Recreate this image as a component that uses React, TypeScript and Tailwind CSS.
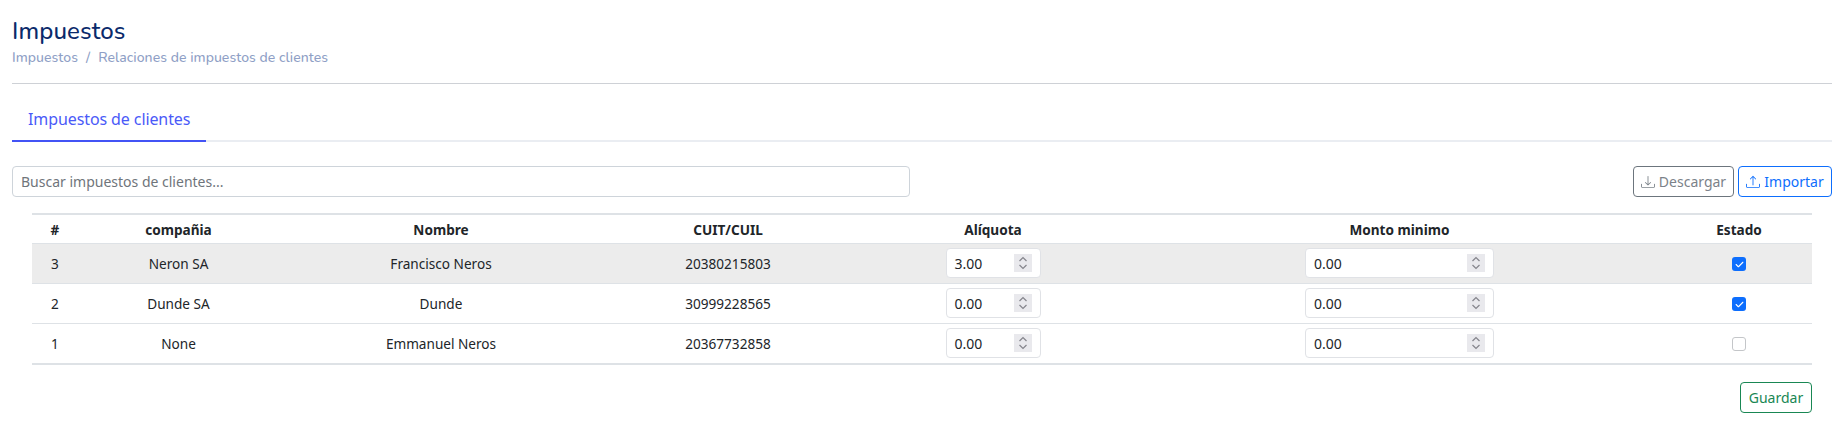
import { BsDownload, BsUpload } from "react-icons/bs";
import { FaCheck } from "react-icons/fa6";

type Row = {
  id: number;
  company: string;
  name: string;
  cuit: string;
  rate: string;
  min: string;
  active: boolean;
};

const rows: Row[] = [
  { id: 3, company: "Neron SA", name: "Francisco Neros", cuit: "20380215803", rate: "3.00", min: "0.00", active: true },
  { id: 2, company: "Dunde SA", name: "Dunde", cuit: "30999228565", rate: "0.00", min: "0.00", active: true },
  { id: 1, company: "None", name: "Emmanuel Neros", cuit: "20367732858", rate: "0.00", min: "0.00", active: false },
];

function NumberField({ value, width }: { value: string; width: string }) {
  return (
    <div className={`mx-auto flex h-[30px] items-center justify-between rounded-[4px] border border-[#e0e2e6] bg-white pl-[8px] pr-[8px] text-[14px] text-[#212529] ${width}`}>
      <span>{value}</span>
      <span className="flex h-[18px] w-[18px] items-center justify-center bg-[#e9e9ed]">
        <svg width="10" height="14" viewBox="0 0 10 14" fill="none" stroke="#85858c" strokeWidth="1.2">
          <path d="M1.5 5 5 1.5 8.500 5" />
          <path d="M1.5 9 5 12.500 8.500 9" />
        </svg>
      </span>
    </div>
  );
}

function Check({ on }: { on: boolean }) {
  if (!on) {
    return <span className="mx-auto block h-[14px] w-[14px] rounded-[3px] border border-[#c4c6c9] bg-white" />;
  }
  return (
    <span className="mx-auto flex h-[14px] w-[14px] items-center justify-center rounded-[3px] bg-[#0d6efd] text-white">
      <FaCheck className="h-[9px] w-[9px]" />
    </span>
  );
}

export default function App() {
  return (
    <div className="h-[427px] w-[1844px] overflow-hidden bg-white px-3 font-['Noto_Sans',sans-serif] text-[14px] text-[#212529]">
      {/* Header */}
      <div className="h-[84px] border-b border-[#ced1d6] pt-[16px] font-['Nunito','Noto_Sans',sans-serif]">
        <h1 className="text-[24px] leading-[30px] font-medium tracking-[0.13px] text-[#0a2a6b]">Impuestos</h1>
        <div className="mt-[2px] flex gap-[8px] text-[14px] leading-[20px] font-medium tracking-[0.05px] text-[#8f9fc6]">
          <span>Impuestos</span>
          <span>/</span>
          <span>Relaciones de impuestos de clientes</span>
        </div>
      </div>

      {/* Tabs */}
      <div className="mt-[18px] h-[40px] border-b-2 border-[#eaedf2]">
        <div className="h-[40px] w-[194px] border-b-2 border-[#4353f5] pl-[16px] pt-[5px] text-[16px] leading-[24px] tracking-[-0.1px] text-[#4a5af8]">
          Impuestos de clientes
        </div>
      </div>

      {/* Search and actions */}
      <div className="mt-[24px] flex items-center justify-between">
        <div className="flex h-[31px] w-[898px] items-center rounded-[4px] border border-[#ced4da] pl-[8px] text-[14px] text-[#6f757b]">
          Buscar impuestos de clientes...
        </div>
        <div className="flex gap-[4px]">
          <button className="flex h-[31px] w-[101px] items-center justify-center gap-[4px] rounded-[4px] border border-[#6c757d] text-[14px] text-[#7b8289]">
            <BsDownload className="h-[14px] w-[14px]" />
            Descargar
          </button>
          <button className="flex h-[31px] w-[94px] items-center justify-center gap-[4px] rounded-[4px] border border-[#0d6efd] text-[14px] text-[#0d6efd]">
            <BsUpload className="h-[14px] w-[14px]" />
            Importar
          </button>
        </div>
      </div>

      {/* Table */}
      <div className="ml-[20px] mt-[16px] w-[1780px]">
        <div className="border-y-2 border-[#dee2e6]">
          <table className="w-full table-fixed text-center text-[13.6px]">
            <colgroup>
              <col className="w-[46px]" />
              <col className="w-[201px]" />
              <col className="w-[324px]" />
              <col className="w-[250px]" />
              <col className="w-[280px]" />
              <col className="w-[533px]" />
              <col className="w-[146px]" />
            </colgroup>
            <thead>
              <tr className="h-[28px] border-b border-[#dee2e6] font-bold [&>th]:pt-[2px]">
                <th>#</th>
                <th>compañia</th>
                <th>Nombre</th>
                <th>CUIT/CUIL</th>
                <th>Alíquota</th>
                <th>Monto minimo</th>
                <th>Estado</th>
              </tr>
            </thead>
            <tbody>
              {rows.map((r, i) => (
                <tr key={r.id} className={`h-[40px] border-b border-[#dee2e6] last:border-b-0 ${i === 0 ? "bg-[#ececec]" : ""}`}>
                  <td className="pt-[2px]">{r.id}</td>
                  <td className="pt-[2px]">{r.company}</td>
                  <td className="pt-[2px]">{r.name}</td>
                  <td className="pt-[2px]">{r.cuit}</td>
                  <td>
                    <NumberField value={r.rate} width="w-[95px]" />
                  </td>
                  <td>
                    <NumberField value={r.min} width="w-[189px]" />
                  </td>
                  <td className="pt-[2px]">
                    <Check on={r.active} />
                  </td>
                </tr>
              ))}
            </tbody>
          </table>
        </div>
        <div className="mt-[17px] flex justify-end">
          <button className="h-[31px] w-[72px] rounded-[4px] border border-[#198754] text-[14px] text-[#198754]">
            Guardar
          </button>
        </div>
      </div>
    </div>
  );
}
